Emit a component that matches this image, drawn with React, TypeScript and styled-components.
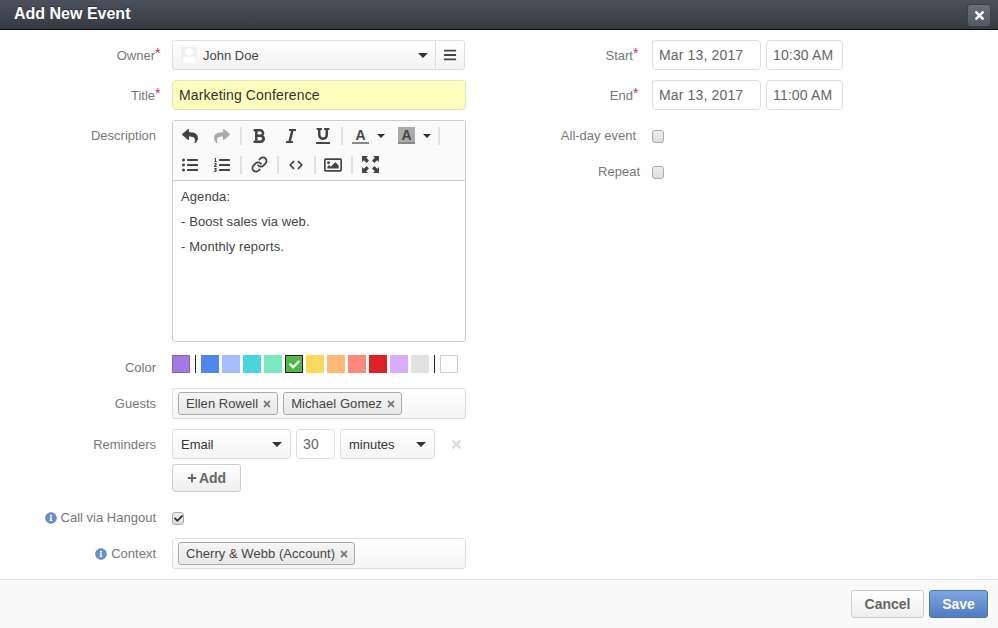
import styled, { createGlobalStyle } from 'styled-components';
import {
  FaBold, FaCheck, FaInfoCircle, FaItalic, FaListOl, FaListUl,
  FaPlus, FaRegImage, FaReply, FaShare, FaTimes, FaUnderline, FaUser, FaBars,
} from 'react-icons/fa';
import { Link as LinkIcon } from 'lucide-react';

const GlobalStyle = createGlobalStyle`
  html, body { margin: 0; padding: 0; background: #fff; }
  body { font-family: "Liberation Sans", Arial, sans-serif; font-size: 14px; color: #333; }
  * { box-sizing: border-box; }
`;

const Modal = styled.div`
  width: 998px;
  height: 628px;
  display: flex;
  flex-direction: column;
  overflow: hidden;
`;

const Header = styled.header`
  height: 30px;
  flex: none;
  display: flex;
  align-items: flex-start;
  justify-content: space-between;
  padding: 0 7px 0 14px;
  background: linear-gradient(to bottom, #4b515b, #353a42);
  border-bottom: 1px solid #0c0c0c;
`;

const HeaderTitle = styled.h1`
  margin: 0;
  font-size: 16px;
  line-height: 27px;
  font-weight: 700;
  color: #fff;
  text-shadow: 0 -1px 0 rgba(0, 0, 0, 0.4);
`;

const CloseButton = styled.button`
  width: 24px;
  height: 23px;
  margin-top: 4px;
  padding: 0;
  display: flex;
  align-items: center;
  justify-content: center;
  border: 1px solid #3a3f47;
  border-radius: 3px;
  background: linear-gradient(to bottom, #6a707a, #545a63);
  color: #fff;
  font-size: 13px;
`;

const Body = styled.main`
  flex: 1;
  display: flex;
  padding-top: 10px;
`;

const LeftColumn = styled.div`
  width: 466px;
  flex: none;
`;

const RightColumn = styled.div`
  margin-left: 14px;
  width: 363px;
  flex: none;
`;

const Row = styled.div<{ $mt?: number; $h?: number; $labelWidth?: number; $gap?: number }>`
  display: flex;
  align-items: flex-start;
  margin-top: ${({ $mt }) => $mt ?? 0}px;
  height: ${({ $h }) => ($h ? `${$h}px` : 'auto')};
  --label-width: ${({ $labelWidth }) => $labelWidth ?? 161}px;
  --label-gap: ${({ $gap }) => $gap ?? 11}px;
`;

const Label = styled.label<{ $pad?: number; $lh?: number }>`
  flex: none;
  width: var(--label-width);
  height: 14px;
  margin-right: var(--label-gap);
  padding-right: ${({ $pad }) => $pad ?? 5}px;
  text-align: right;
  color: #777;
  font-size: 13px;
  line-height: ${({ $lh }) => $lh ?? 31}px;
  white-space: nowrap;
`;

const Star = styled.span`
  display: inline-block;
  width: 6px;
  color: #c9304f;
  font-size: 14px;
  line-height: 1;
  vertical-align: 2px;
  text-align: left;
`;

const InfoIcon = styled(FaInfoCircle)`
  color: #6a90cb;
  font-size: 12px;
  margin-right: 4px;
  vertical-align: -2px;
`;

const Field = styled.div`
  flex: none;
  width: 294px;
`;

const OwnerGroup = styled.div`
  display: flex;
  width: 293px;
  height: 30px;
  border: 1px solid #ddd;
  border-radius: 3px;
  background: linear-gradient(to bottom, #fff, #f3f3f3);
`;

const OwnerMain = styled.div`
  flex: 1;
  display: flex;
  align-items: center;
  padding: 0 7px 0 8px;
  color: #444;
  font-size: 13px;
`;

const Avatar = styled.span`
  width: 16px;
  height: 16px;
  margin-right: 6px;
  display: flex;
  align-items: flex-end;
  justify-content: center;
  overflow: hidden;
  background: #f0f0f0;
  color: #fff;
  font-size: 15px;
`;

const Caret = styled.span<{ $size?: number }>`
  width: 0;
  height: 0;
  flex: none;
  margin-left: auto;
  border-left: ${({ $size }) => $size ?? 5}px solid transparent;
  border-right: ${({ $size }) => $size ?? 5}px solid transparent;
  border-top: ${({ $size }) => $size ?? 5}px solid #333;
`;

const ToolCaret = styled(Caret)`
  margin-left: 0;
`;

const OwnerMenu = styled.div`
  width: 29px;
  flex: none;
  display: flex;
  align-items: center;
  justify-content: center;
  border-left: 1px solid #ddd;
  color: #444;
  font-size: 14px;
`;

const TextInput = styled.div<{ $width?: number; $highlight?: boolean }>`
  width: ${({ $width }) => ($width ? `${$width}px` : '100%')};
  height: 30px;
  flex: none;
  padding: 0 6px;
  border: 1px solid ${({ $highlight }) => ($highlight ? '#e2e2b8' : '#ddd')};
  border-radius: 4px;
  background: ${({ $highlight }) => ($highlight ? '#fbffbb' : '#fff')};
  color: ${({ $highlight }) => ($highlight ? '#333' : '#666')};
  font-size: 14px;
  letter-spacing: 0.15px;
  line-height: 28px;
  white-space: nowrap;
`;

const Editor = styled.div`
  height: 222px;
  border: 1px solid #ccc;
  border-radius: 3px;
  display: flex;
  flex-direction: column;
`;

const Toolbar = styled.div`
  height: 60px;
  flex: none;
  background: #fafafa;
  border-bottom: 1px solid #ccc;
  padding: 0 0 0 1px;
`;

const ToolRow = styled.div`
  display: flex;
  align-items: center;
  height: 29px;
`;

const ToolButton = styled.span<{ $off?: boolean; $size?: number }>`
  width: 32px;
  height: 28px;
  flex: none;
  display: flex;
  align-items: center;
  justify-content: center;
  font-size: ${({ $size }) => $size ?? 16}px;
  color: ${({ $off }) => ($off ? '#aaa' : '#444')};
`;

const ColorButton = styled.span`
  width: 46px;
  height: 28px;
  flex: none;
  display: flex;
  align-items: center;
  gap: 8px;
  padding-left: 8px;
`;

const ToolSep = styled.span`
  width: 2px;
  height: 18px;
  flex: none;
  margin: 0 1px 0 2px;
  background: #e4dede;
`;

const ColorGlyph = styled.span<{ $filled?: boolean }>`
  width: 17px;
  height: 17px;
  flex: none;
  display: block;
  font-weight: 700;
  font-size: 14px;
  line-height: 16px;
  text-align: center;
  color: #444;
  border-bottom: 2px solid #888;
  background: ${({ $filled }) => ($filled ? '#aaa' : 'transparent')};
`;

const EditorContent = styled.div`
  flex: 1;
  padding: 3px 8px;
  font-size: 13px;
  letter-spacing: 0.1px;
  color: #444;
`;

const EditorLine = styled.p`
  margin: 0;
  line-height: 25px;
`;

const Swatches = styled.div`
  display: flex;
  gap: 3px;
  height: 18px;
`;

const Swatch = styled.span<{ $color: string; $border?: string; $selected?: boolean }>`
  width: 18px;
  height: 18px;
  flex: none;
  display: flex;
  align-items: center;
  justify-content: center;
  background: ${({ $color }) => $color};
  border: 1px solid ${({ $selected, $border, $color }) => ($selected ? '#222' : $border ?? $color)};
  color: #fff;
  font-size: 11px;
`;

const SwatchDivider = styled.span`
  width: 1px;
  height: 18px;
  flex: none;
  margin: 0 2px;
  background: #222;
`;

const TagBox = styled.div`
  height: 31px;
  padding: 3px 5px;
  display: flex;
  gap: 5px;
  border: 1px solid #ddd;
  border-radius: 3px;
  background: linear-gradient(to bottom, #fff, #f5f5f5);
`;

const Tag = styled.span`
  height: 23px;
  padding: 0 5px 0 7px;
  display: flex;
  align-items: center;
  gap: 4px;
  border: 1px solid #aaa;
  border-radius: 3px;
  background: linear-gradient(to bottom, #f5f5f5, #e8e8e8);
  color: #444;
  font-size: 13px;
  letter-spacing: 0.05px;
  white-space: nowrap;
`;

const TagRemove = styled(FaTimes)`
  color: #777;
  font-size: 10px;
`;

const ReminderRow = styled.div`
  display: flex;
  gap: 5px;
  align-items: center;
`;

const SelectBox = styled.div<{ $width: number }>`
  width: ${({ $width }) => $width}px;
  height: 30px;
  flex: none;
  display: flex;
  align-items: center;
  padding: 0 8px;
  border: 1px solid #ddd;
  border-radius: 3px;
  background: linear-gradient(to bottom, #fff, #f5f5f5);
  color: #333;
  font-size: 13px;
`;

const ReminderRemove = styled(FaTimes)`
  margin-left: 10px;
  color: #ddd;
  font-size: 13px;
`;

const AddButton = styled.button`
  width: 69px;
  height: 28px;
  margin-top: 5px;
  padding: 0;
  display: flex;
  align-items: center;
  justify-content: center;
  gap: 2px;
  border: 1px solid #ccc;
  border-radius: 3px;
  background: linear-gradient(to bottom, #fff, #eee);
  color: #666;
  font-family: inherit;
  font-size: 14px;
  font-weight: 700;
`;

const CheckBox = styled.span`
  width: 12px;
  height: 13px;
  flex: none;
  display: flex;
  align-items: center;
  justify-content: center;
  margin-top: 1px;
  border: 1px solid #aaa;
  border-radius: 3px;
  background: linear-gradient(to bottom, #eee, #ddd);
  color: #333;
  font-size: 9px;
`;

const DateGroup = styled.div`
  display: flex;
  gap: 5px;
`;

const Footer = styled.footer`
  height: 49px;
  flex: none;
  display: flex;
  align-items: flex-start;
  justify-content: flex-end;
  gap: 5px;
  padding: 10px 10px 0 0;
  background: #f9f9f9;
  border-top: 1px solid #e2e2e2;
`;

const FooterButton = styled.button<{ $primary?: boolean }>`
  height: 28px;
  width: ${({ $primary }) => ($primary ? 59 : 73)}px;
  padding: 0;
  border: 1px solid ${({ $primary }) => ($primary ? '#4a74b0' : '#ccc')};
  border-radius: 3px;
  background: ${({ $primary }) =>
    $primary ? 'linear-gradient(to bottom, #7ea6e2, #4f7bc0)' : 'linear-gradient(to bottom, #fff, #eee)'};
  color: ${({ $primary }) => ($primary ? '#fff' : '#666')};
  font-family: inherit;
  font-size: 14px;
  font-weight: 700;
`;

const swatchColors = ['#4f86ec', '#a4bdfc', '#46d6db', '#7ae7bf'];
const swatchColorsAfter = ['#fbd75b', '#ffb878', '#ff887c', '#dc2127', '#dbadff', '#e1e1e1'];

const ExpandIcon = () => (
  <svg width="17" height="17" viewBox="0 0 17 17" fill="#444">
    <path d="M0 0h6L4.2 1.8 7 4.6 4.6 7 1.8 4.2 0 6zM17 0v6l-1.8-1.8L12.4 7 10 4.6l2.8-2.8L11 0zM0 17v-6l1.8 1.8L4.6 10 7 12.4l-2.8 2.8L6 17zM17 17h-6l1.8-1.8L10 12.4l2.4-2.4 2.8 2.8L17 11z" />
  </svg>
);

const CodeIcon = () => (
  <svg width="14" height="10" viewBox="0 0 14 10" fill="none" stroke="#444" strokeWidth="1.8">
    <path d="M5 1 1.3 5 5 9M9 1l3.7 4L9 9" />
  </svg>
);

const RemovableTag = ({ name }: { name: string }) => (
  <Tag>
    {name}
    <TagRemove />
  </Tag>
);

export default function App() {
  return (
    <>
      <GlobalStyle />
      <Modal>
        <Header>
          <HeaderTitle>Add New Event</HeaderTitle>
          <CloseButton>
            <FaTimes />
          </CloseButton>
        </Header>

        <Body>
          <LeftColumn>
            <Row>
              <Label $pad={0}>Owner<Star>*</Star></Label>
              <Field>
                <OwnerGroup>
                  <OwnerMain>
                    <Avatar><FaUser /></Avatar>
                    John Doe
                    <Caret />
                  </OwnerMain>
                  <OwnerMenu><FaBars /></OwnerMenu>
                </OwnerGroup>
              </Field>
            </Row>

            <Row $mt={10}>
              <Label $pad={0}>Title<Star>*</Star></Label>
              <Field>
                <TextInput $highlight>Marketing Conference</TextInput>
              </Field>
            </Row>

            <Row $mt={10}>
              <Label>Description</Label>
              <Field>
                <Editor>
                  <Toolbar>
                    <ToolRow>
                      <ToolButton><FaReply /></ToolButton>
                      <ToolButton $off><FaShare /></ToolButton>
                      <ToolSep />
                      <ToolButton><FaBold /></ToolButton>
                      <ToolButton><FaItalic /></ToolButton>
                      <ToolButton><FaUnderline /></ToolButton>
                      <ToolSep />
                      <ColorButton><ColorGlyph>A</ColorGlyph><ToolCaret $size={4} /></ColorButton>
                      <ColorButton><ColorGlyph $filled>A</ColorGlyph><ToolCaret $size={4} /></ColorButton>
                      <ToolSep />
                    </ToolRow>
                    <ToolRow>
                      <ToolButton><FaListUl /></ToolButton>
                      <ToolButton><FaListOl /></ToolButton>
                      <ToolSep />
                      <ToolButton><LinkIcon size={17} strokeWidth={2.5} /></ToolButton>
                      <ToolSep />
                      <ToolButton><CodeIcon /></ToolButton>
                      <ToolSep />
                      <ToolButton $size={18}><FaRegImage /></ToolButton>
                      <ToolSep />
                      <ToolButton><ExpandIcon /></ToolButton>
                    </ToolRow>
                  </Toolbar>
                  <EditorContent>
                    <EditorLine>Agenda:</EditorLine>
                    <EditorLine>- Boost sales via web.</EditorLine>
                    <EditorLine>- Monthly reports.</EditorLine>
                  </EditorContent>
                </Editor>
              </Field>
            </Row>

            <Row $mt={13} $h={18}>
              <Label $lh={25}>Color</Label>
              <Swatches>
                <Swatch $color="#a47ae2" $border="#8560bd" />
                <SwatchDivider />
                {swatchColors.map((c) => <Swatch key={c} $color={c} />)}
                <Swatch $color="#51b749" $selected><FaCheck /></Swatch>
                {swatchColorsAfter.map((c) => <Swatch key={c} $color={c} />)}
                <SwatchDivider />
                <Swatch $color="#fff" $border="#ccc" />
              </Swatches>
            </Row>

            <Row $mt={15}>
              <Label>Guests</Label>
              <Field>
                <TagBox>
                  <RemovableTag name="Ellen Rowell" />
                  <RemovableTag name="Michael Gomez" />
                </TagBox>
              </Field>
            </Row>

            <Row $mt={10}>
              <Label>Reminders</Label>
              <Field>
                <ReminderRow>
                  <SelectBox $width={119}>Email<Caret /></SelectBox>
                  <TextInput $width={39}>30</TextInput>
                  <SelectBox $width={95}>minutes<Caret /></SelectBox>
                  <ReminderRemove />
                </ReminderRow>
                <AddButton><FaPlus size={10} />Add</AddButton>
              </Field>
            </Row>

            <Row $mt={19}>
              <Label $lh={14}><InfoIcon />Call via Hangout</Label>
              <CheckBox><FaCheck /></CheckBox>
            </Row>

            <Row $mt={13}>
              <Label><InfoIcon />Context</Label>
              <Field>
                <TagBox>
                  <RemovableTag name="Cherry & Webb (Account)" />
                </TagBox>
              </Field>
            </Row>
          </LeftColumn>

          <RightColumn>
            <Row $labelWidth={160} $gap={12}>
              <Label $pad={1}>Start<Star>*</Star></Label>
              <DateGroup>
                <TextInput $width={109}>Mar 13, 2017</TextInput>
                <TextInput $width={77}>10:30 AM</TextInput>
              </DateGroup>
            </Row>
            <Row $mt={10} $labelWidth={160} $gap={12}>
              <Label $pad={1}>End<Star>*</Star></Label>
              <DateGroup>
                <TextInput $width={109}>Mar 13, 2017</TextInput>
                <TextInput $width={77}>11:00 AM</TextInput>
              </DateGroup>
            </Row>
            <Row $mt={19} $labelWidth={160} $gap={12}>
              <Label $pad={4} $lh={14}>All-day event</Label>
              <CheckBox />
            </Row>
            <Row $mt={22} $labelWidth={160} $gap={12}>
              <Label $pad={0} $lh={14}>Repeat</Label>
              <CheckBox />
            </Row>
          </RightColumn>
        </Body>

        <Footer>
          <FooterButton>Cancel</FooterButton>
          <FooterButton $primary>Save</FooterButton>
        </Footer>
      </Modal>
    </>
  );
}
